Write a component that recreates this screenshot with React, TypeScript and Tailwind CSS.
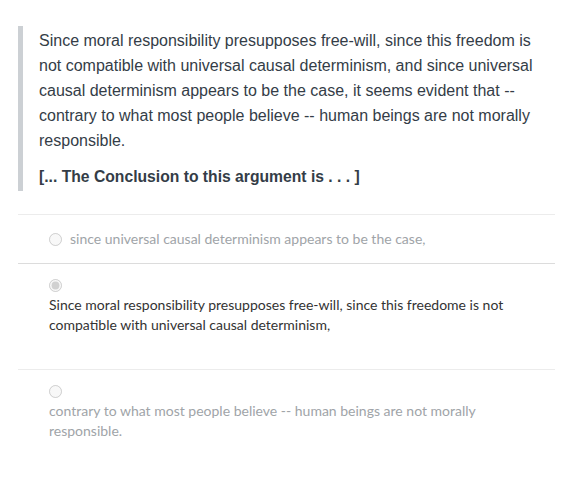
export default function App() {
  const options = [
    {
      id: "a",
      text: "since universal causal determinism appears to be the case,",
      selected: false,
      cls: "pt-[14px] pb-[14px]",
    },
    {
      id: "b",
      text: "Since moral responsibility presupposes free-will, since this freedome is not compatible with universal causal determinism,",
      selected: true,
      cls: "pt-[15px] pb-[34px]",
    },
    {
      id: "c",
      text: "contrary to what most people believe -- human beings are not morally responsible.",
      selected: false,
      cls: "pt-[15px] pb-[34px]",
    },
  ];

  return (
    <div className="bg-white min-h-screen px-[18px] pt-[26px]">
      <div className="border-l-[5px] border-[#ccd0d4] pl-[16px] pt-[2px] pb-[2px] font-['Liberation_Sans',Arial,sans-serif] text-[16px] leading-[25px] text-[#343d47]">
        <p>
          Since moral responsibility presupposes free-will, since this freedom is not compatible
          with universal causal determinism, and since universal causal determinism appears to
          be the case, it seems evident that -- contrary to what most people believe -- human
          beings are not morally responsible.
        </p>
        <p className="mt-[11px] font-bold text-[15.7px]">[... The Conclusion to this argument is . . . ]</p>
      </div>

      <div className="mt-[23px] font-['Lato','Open_Sans',sans-serif] text-[14px] leading-[20px]">
        {options.map((opt, i) => (
          <div
            key={opt.id}
            className={
              "border-t " +
              (i === 1 ? "border-[#dcdcdc] " : "border-[#ececec] ") +
              opt.cls
            }>
            <label className="flex flex-wrap items-center gap-y-[3px] pl-[31px] pr-[50px]">
              <input
                type="radio"
                name="answer"
                disabled
                defaultChecked={opt.selected}
                className="m-0 mr-[8px] h-[13px] w-[13px]"
              />
              <span className={opt.selected ? "text-[#333]" : "text-[#a0a4a8]"}>{opt.text}</span>
            </label>
          </div>
        ))}
      </div>
    </div>
  );
}
